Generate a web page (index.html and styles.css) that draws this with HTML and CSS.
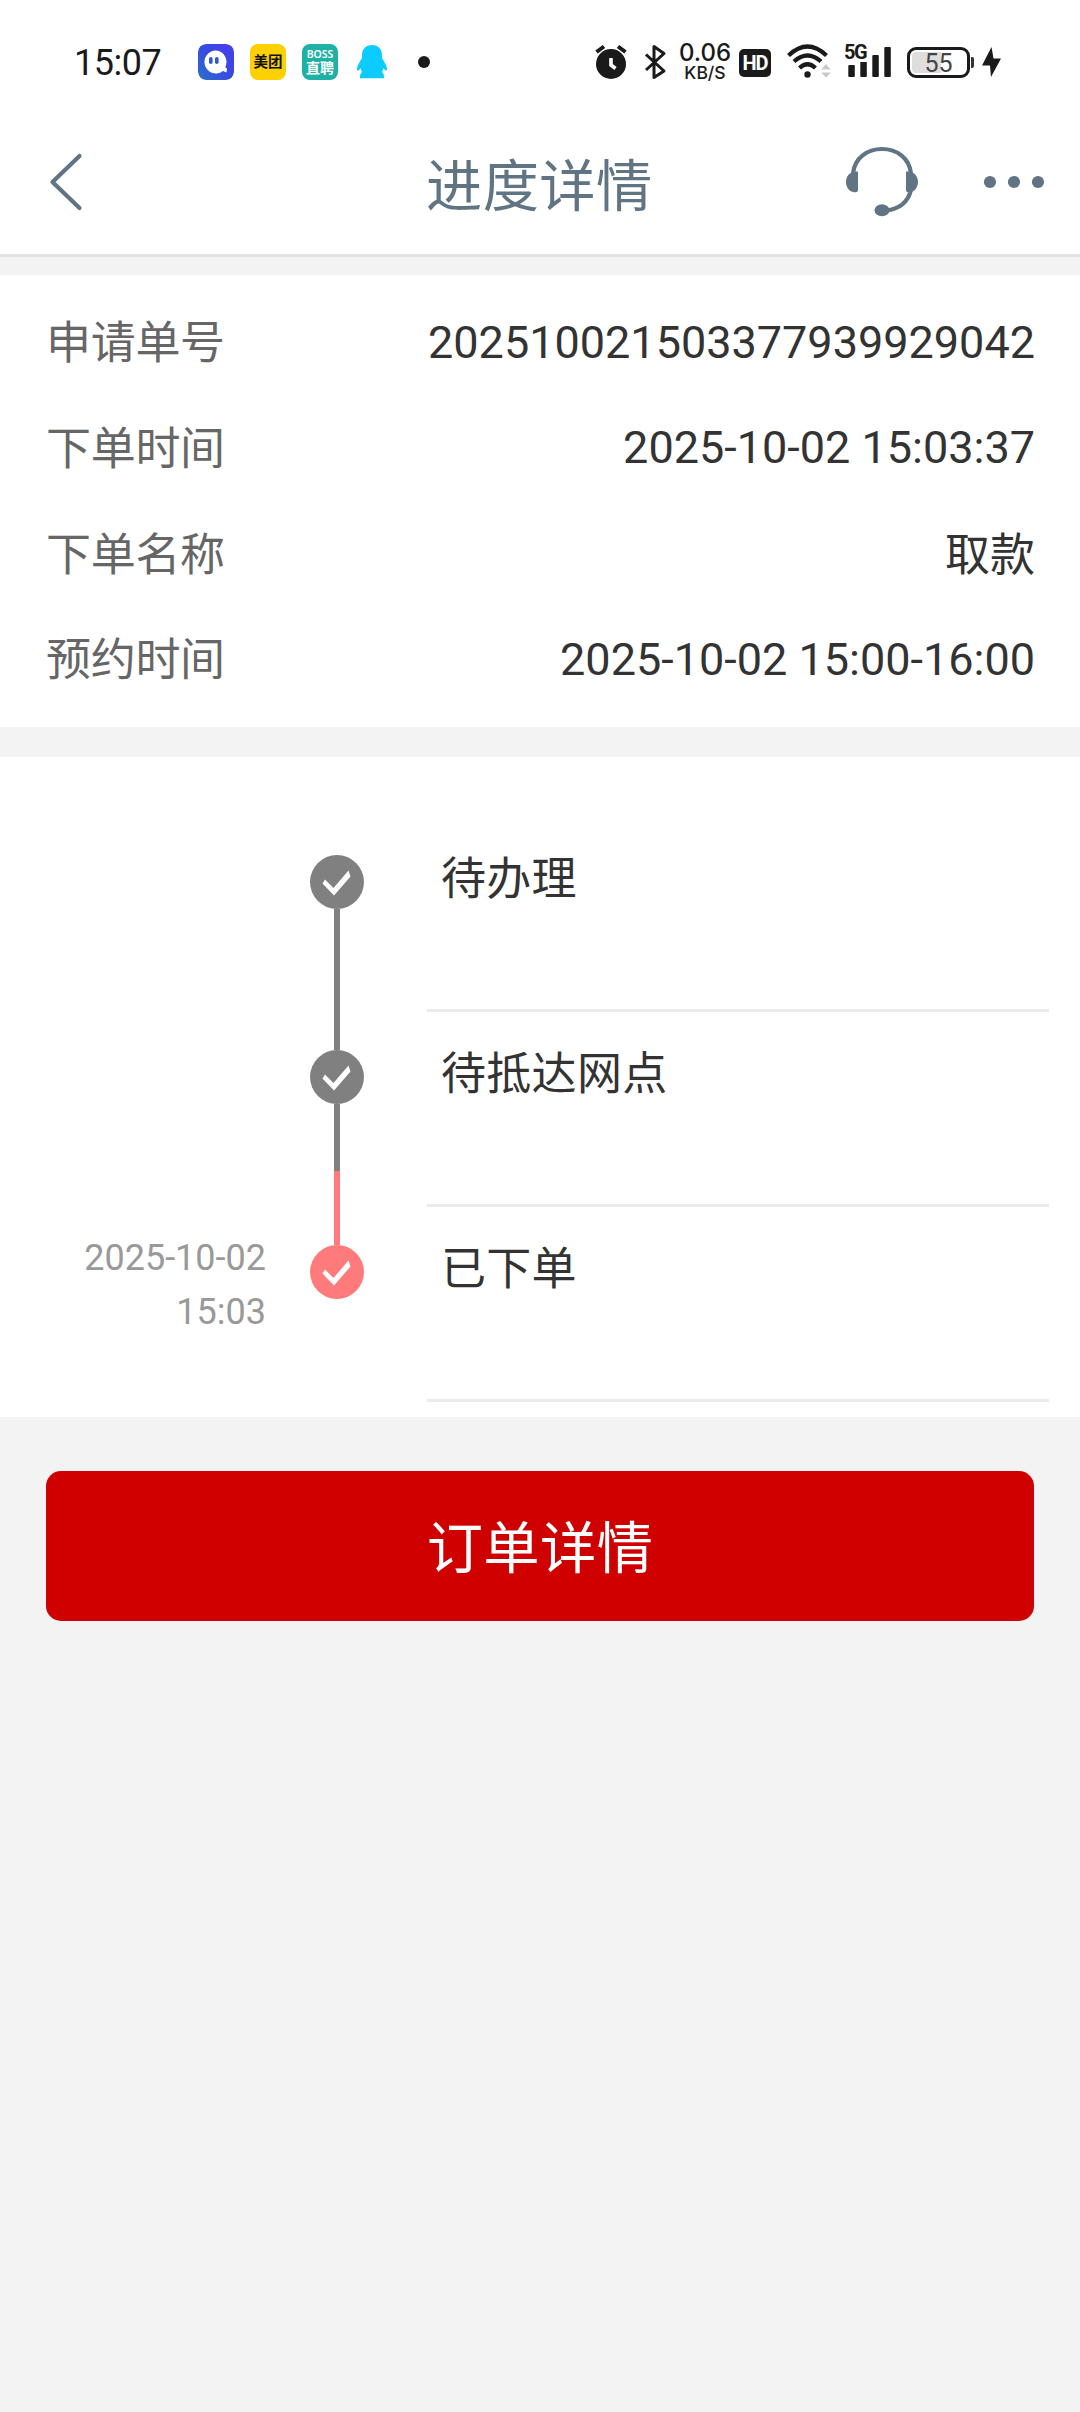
FILE: index.html
```html
<!DOCTYPE html>
<html lang="zh-CN">
<head>
<meta charset="utf-8">
<title>进度详情</title>
<link rel="stylesheet" href="styles.css">
</head>
<body>
<div class="status">
  <div class="status-left">
    <span class="clock">15:07</span>
    <svg class="app" viewBox="0 0 36 36" width="36" height="36"><defs><linearGradient id="g" x1="0" y1="1" x2="1" y2="0"><stop offset="0" stop-color="#2b72c8"/><stop offset=".5" stop-color="#374be0"/><stop offset="1" stop-color="#4a3cf0"/></linearGradient></defs><rect width="36" height="36" rx="8" fill="url(#g)"/><path d="M18 6.500a11.500 11.500 0 1 0 7 20.600l3.500 1.500 .5-4-1.800-1.300A11.500 11.500 0 0 0 18 6.500z" fill="#fff"/><rect x="11" y="13" width="3.600" height="7" rx="1.800" fill="#3356d8"/><rect x="17" y="13" width="3.600" height="7" rx="1.800" fill="#3356d8"/></svg>
    <span class="app app-meituan">美团</span>
    <span class="app app-boss"><span class="boss-en">BOSS</span><span class="boss-cn">直聘</span></span>
    <svg class="qq" viewBox="356 45 32 36" width="32" height="36"><path d="M372 46c-6.500 0-10 4.500-10 10v3c-2.500 4-5 8-5 11 0 2 1.500 2.200 3.500-.8l1.500 4c-1.500 1.200-2.200 2.500-2 6h24c.2-3.500-.5-4.800-2-6l1.500-4c2 3 3.500 2.800 3.500 .8 0-3-2.500-7-5-11v-3c0-5.500-3.500-10-10-10z" fill="#0bcbff"/></svg>
    <span class="more-dot"></span>
  </div>
  <div class="status-right">
    <svg viewBox="594 42 34 40" width="34" height="40"><circle cx="611" cy="64" r="15" fill="#1a1a1a"/><path d="M596.500 52l7.500-5.500M618 46.500l7.500 5.500" stroke="#1a1a1a" stroke-width="4"/><path d="M611 58v7l4.500 3.500" fill="none" stroke="#fff" stroke-width="3.600"/></svg>
    <svg class="bt" viewBox="643 42 25 40" width="25" height="40"><path d="M646 54.500l18 16.500-10 6.500V46.500l10 7L646 70" fill="none" stroke="#1a1a1a" stroke-width="3" stroke-linejoin="round"/></svg>
    <span class="speed"><span class="speed-num">0.06</span><span class="speed-unit">KB/S</span></span>
    <span class="hd">HD</span>
    <svg class="wifi" viewBox="786 42 46 40" width="46" height="40"><g fill="none" stroke="#1a1a1a" stroke-width="4.200"><path d="M788.500 55.500Q807.500 37.500 826.500 55.500"/><path d="M794 61.500Q807.500 49.500 821 61.500"/><path d="M799.500 68Q807.500 60.500 815.500 68"/></g><circle cx="807.500" cy="74.500" r="3.200" fill="#1a1a1a"/><path d="M826 64l4.800 5.500h-9.600zM826 77.500l4.800-5h-9.600z" fill="#c9c9c9"/></svg>
    <span class="cell"><svg viewBox="844 42 48 40" width="48" height="40"><g fill="#1a1a1a"><rect x="848.300" y="65" width="6.500" height="12" rx="1"/><rect x="860.300" y="61.500" width="6.500" height="15.500" rx="1"/><rect x="872.300" y="55" width="6.500" height="22" rx="1"/><rect x="884.300" y="47" width="6.500" height="30" rx="1"/></g></svg><span class="net">5G</span></span>
    <span class="battery"><span class="battery-level"></span><span class="battery-text">55</span></span>
    <span class="nub"></span>
    <svg class="bolt" viewBox="981 42 21 40" width="21" height="40"><path d="M991.500 47L982 65.500h8L991 77l10-18.500h-7.500L991.500 47z" fill="#1a1a1a"/></svg>
  </div>
</div>
<header class="nav">
  <svg class="back" viewBox="48 142 40 80" width="40" height="80"><path d="M79.500 156L52.500 182l27 26" fill="none" stroke="#607483" stroke-width="4.200" stroke-linecap="round" stroke-linejoin="round"/></svg>
  <h1 class="title">进度详情</h1>
  <svg class="headset" viewBox="842 142 80 80" width="80" height="80"><g fill="none" stroke="#607483" stroke-width="4.200"><path d="M853 173C855 158 867 149 882 149s27 9 29 24"/><path d="M911 190c-3 12-12 19-25 20.500"/></g><path d="M858 171.500h-3.500c-5 1-8.500 5-8.500 10.500s3.500 9.500 8 10.300c2.500.3 4-.8 4-2.300zM906 171.500h3.500c5 1 8.500 5 8.500 10.500s-3.500 9.500-8 10.300c-2.500.3-4-.8-4-2.300z" fill="#607483"/><ellipse cx="882" cy="210.300" rx="7.500" ry="6" fill="#607483"/></svg>
  <svg class="menu" viewBox="982 172 64 20" width="64" height="20"><g fill="#607483"><circle cx="990" cy="182" r="6.100"/><circle cx="1014" cy="182" r="6.100"/><circle cx="1038" cy="182" r="6.100"/></g></svg>
</header>
<section class="info">
  <div class="row"><span class="label">申请单号</span><span class="value">202510021503377939929042</span></div>
  <div class="row"><span class="label">下单时间</span><span class="value">2025-10-02 15:03:37</span></div>
  <div class="row"><span class="label">下单名称</span><span class="value value-cn">取款</span></div>
  <div class="row"><span class="label">预约时间</span><span class="value">2025-10-02 15:00-16:00</span></div>
</section>
<section class="timeline">
  <div class="step">
    <div class="date"></div>
    <div class="rail"><svg class="check" viewBox="0 0 54 54" width="54" height="54"><circle cx="27" cy="27" r="27"/><path d="M15 24.500l-2.500 4L24 40.500l16.500-19-2-6L23.500 33z" fill="#fff"/></svg><span class="line"></span></div>
    <div class="name">待办理</div>
  </div>
  <div class="step">
    <div class="date"></div>
    <div class="rail"><svg class="check" viewBox="0 0 54 54" width="54" height="54"><circle cx="27" cy="27" r="27"/><path d="M15 24.500l-2.500 4L24 40.500l16.500-19-2-6L23.500 33z" fill="#fff"/></svg><span class="line line-next"></span></div>
    <div class="name">待抵达网点</div>
  </div>
  <div class="step active">
    <div class="date">2025-10-02<br>15:03</div>
    <div class="rail"><svg class="check" viewBox="0 0 54 54" width="54" height="54"><circle cx="27" cy="27" r="27"/><path d="M15 24.500l-2.500 4L24 40.500l16.500-19-2-6L23.500 33z" fill="#fff"/></svg></div>
    <div class="name">已下单</div>
  </div>
</section>
<button class="submit">订单详情</button>
</body>
</html>
```
FILE: styles.css
```css
* { box-sizing: border-box; }
body {
  margin: 0;
  width: 1080px;
  min-height: 2412px;
  background: #f3f3f3;
  font-family: Roboto, "Noto Sans CJK SC", sans-serif;
  color: #333;
}
svg { display: block; flex: none; }

.status {
  display: flex;
  justify-content: space-between;
  height: 124px;
  padding: 42px 78px 0 74px;
  background: #fff;
  color: #1a1a1a;
}
.status-left, .status-right { display: flex; align-items: center; height: 40px; }
.clock { width: 124px; padding-top: 2px; font-size: 36px; line-height: 40px; letter-spacing: -0.5px; }
.app { width: 36px; height: 36px; margin-right: 16px; border-radius: 8px; }
.app-meituan {
  background: #ffd000;
  color: #111;
  font-size: 14.500px;
  font-weight: 700;
  line-height: 37px;
  text-align: center;
}
.app-boss {
  display: flex;
  flex-direction: column;
  align-items: center;
  background: #1fb0a6;
  color: #fff;
  font-weight: 700;
}
.boss-en { margin-top: 4px; font: 600 10.500px/12px "Noto Sans", sans-serif; }
.boss-cn { font-size: 14px; line-height: 17px; }
.qq { margin-left: 2px; }
.more-dot { width: 12px; height: 12px; margin-left: 30px; border-radius: 50%; background: #1a1a1a; }

.bt { margin-left: 15px; }
.speed { display: flex; flex-direction: column; align-items: center; width: 52px; margin-left: 11px; font-family: Inter, sans-serif; }
.speed-num { font-size: 24px; font-weight: 500; line-height: 22px; }
.speed-unit { font-size: 17.500px; font-weight: 500; line-height: 18px; }
.hd {
  width: 32px;
  height: 28px;
  margin: 2px 0 0 8px;
  border-radius: 5px;
  background: #1a1a1a;
  color: #fff;
  font-size: 20px;
  font-weight: 700;
  line-height: 29px;
  letter-spacing: -1px;
  text-align: center;
}
.wifi { margin-left: 15px; }
.cell { position: relative; margin-left: 12px; }
.net {
  position: absolute;
  top: 1px;
  left: 0;
  padding: 0 1px 1px 0;
  background: #fff;
  font-size: 20px;
  font-weight: 700;
  line-height: 18px;
  letter-spacing: -1.500px;
}
.battery {
  position: relative;
  width: 63px;
  height: 31px;
  margin: 0 0 0 15px;
  border: 3px solid #1a1a1a;
  border-radius: 9px;
}
.battery-level { position: absolute; top: 2px; bottom: 2px; left: 2px; width: 29px; border-radius: 4px 0 0 4px; background: #dedede; }
.battery-text { position: relative; display: block; color: #444; font-size: 25px; line-height: 27px; text-align: center; }
.nub { width: 3px; height: 11px; margin: 0 7px 0 1px; border-radius: 0 2px 2px 0; background: #333; }

.nav {
  display: flex;
  align-items: center;
  height: 133px;
  padding: 0 34px 15px 48px;
  border-bottom: 3px solid #e2e2e2;
  background: #fff;
}
.title {
  width: 228px;
  margin: 10px 188px 0 338px;
  color: #607483;
  font-size: 56.250px;
  font-weight: 400;
  line-height: 80px;
  letter-spacing: 0.4px;
  white-space: nowrap;
}
.menu { margin-left: 60px; }

.info { margin-top: 18px; padding: 15px 45px 14px 46px; height: 452px; background: #fff; }
.row { display: flex; justify-content: space-between; align-items: center; height: 105.670px; font-size: 45px; line-height: 66px; }
.label { padding-top: 3px; color: #666; letter-spacing: -0.3px; }
.value-cn { padding-top: 3px; }

.timeline { height: 660px; margin-top: 30px; padding: 61px 31px 0 0; background: #fff; }
.step { display: grid; grid-template-columns: 266px 161px 1fr; grid-template-rows: 195px; height: 195px; }
.date { padding-top: 23px; color: #999; font-size: 36px; line-height: 54px; text-align: right; }
.rail { display: flex; flex-direction: column; align-items: center; padding: 37px 19px 0 0; }
.check { fill: #808080; }
.active .check { fill: #ff7b7b; }
.line { flex: none; width: 6px; height: 141px; background: #808080; }
.line-next { background: linear-gradient(#808080 67px, #ff7b7b 67px); }
.name {
  height: 194px;
  padding: 29px 0 0 14px;
  border-bottom: 3px solid #ebebeb;
  font-size: 45px;
  line-height: 66px;
  letter-spacing: 0.3px;
}

.submit {
  display: block;
  width: 988px;
  height: 150px;
  margin: 54px 46px 0;
  padding: 6px 0 0;
  border: 0;
  border-radius: 15px;
  background: #cf0000;
  color: #fff;
  font: 56.250px/80px Roboto, "Noto Sans CJK SC", sans-serif;
  letter-spacing: 0.4px;
}
```
